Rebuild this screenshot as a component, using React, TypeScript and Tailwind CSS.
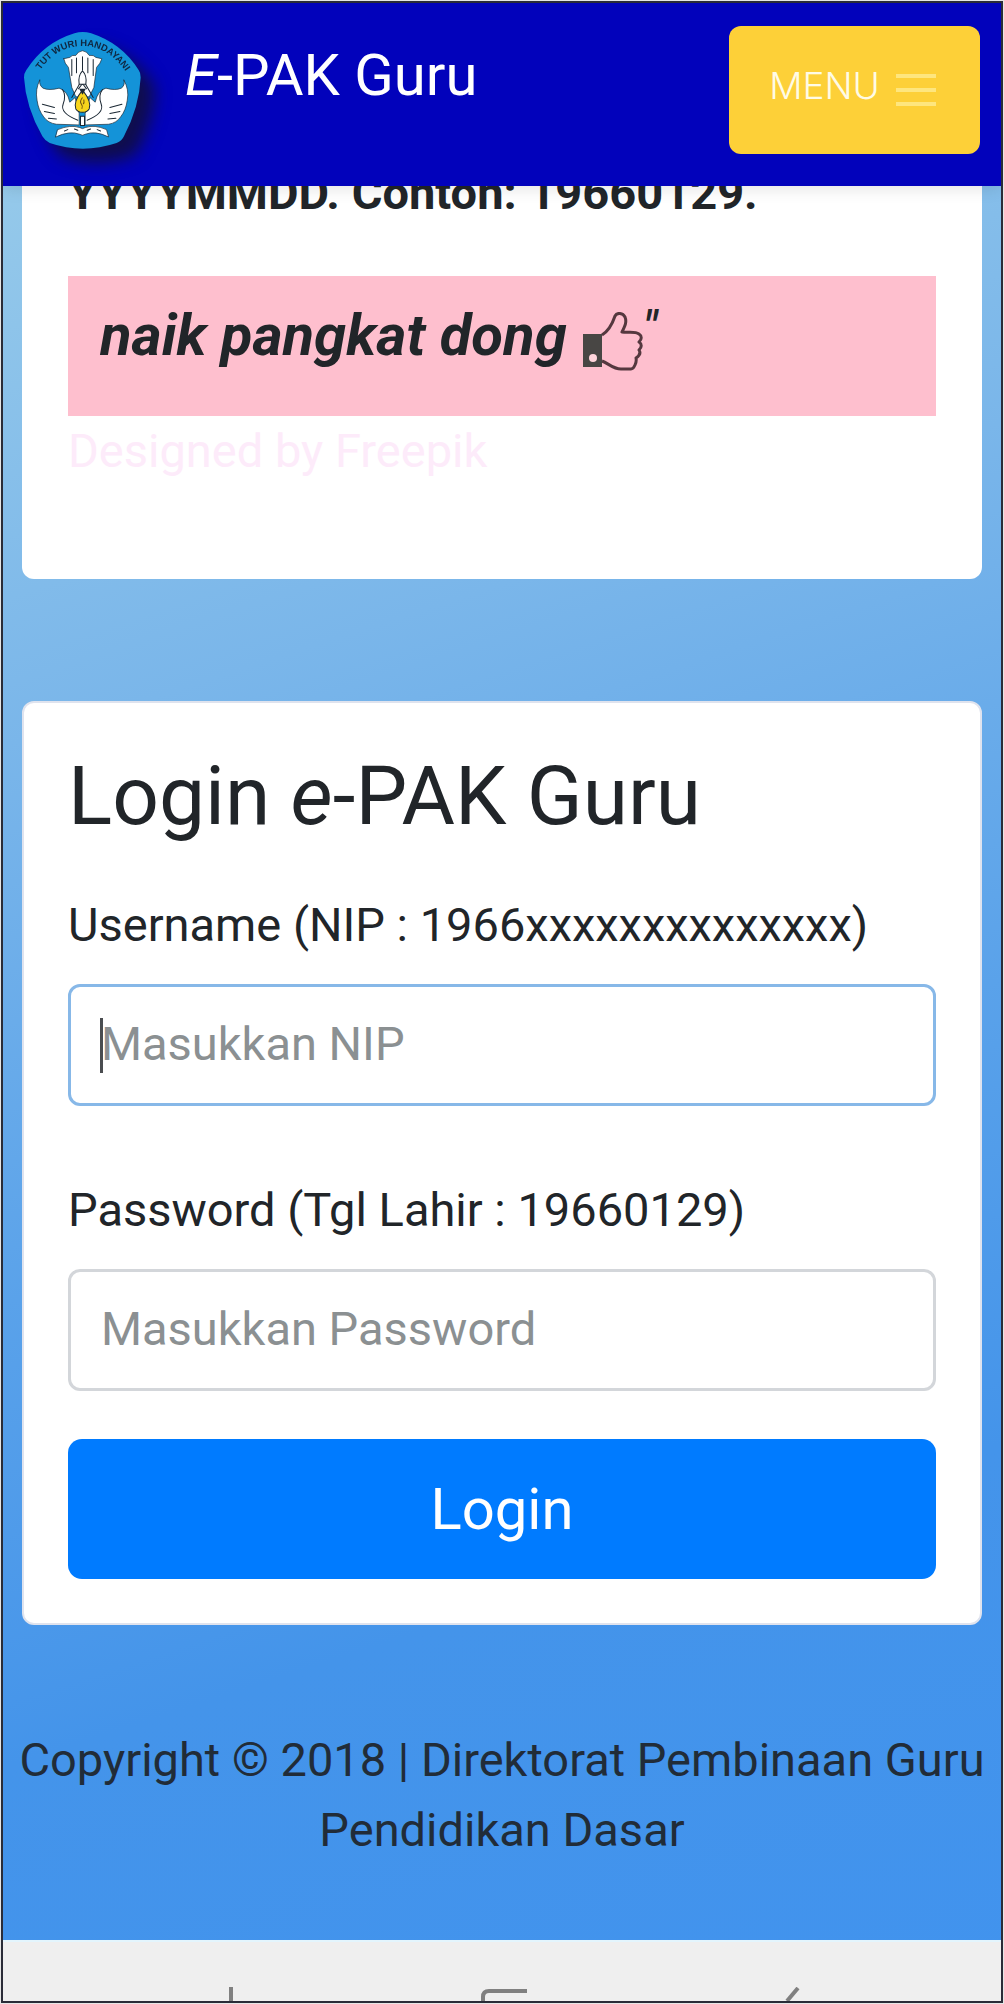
import type { InputHTMLAttributes } from 'react'

function Emblem() {
  return (
    <svg viewBox="75 96 350 350" className="size-[117px] shrink-0 drop-shadow-[14px_14px_8px_rgba(20,18,40,0.75)]" role="img" aria-label="Tut Wuri Handayani">
      <defs>
        <path id="motto" d="M116 222 Q166 138 250 138 Q334 138 386 226" />
      </defs>
      <path
        d="M226 100 Q250 92 276 100 Q368 130 418 210 Q424 218 424 232 Q420 320 374 408 Q368 422 352 428 Q250 462 152 428 Q138 422 130 408 Q80 320 75 232 Q75 220 82 210 Q134 128 226 100Z"
        fill="#1493d8"
      />
      <text fill="#10263f" fontFamily="Liberation Sans, Arial, sans-serif" fontSize="28" fontWeight="700">
        <textPath href="#motto" startOffset="50%" textAnchor="middle">
          TUT WURI HANDAYANI
        </textPath>
      </text>
      <g fill="#fff" stroke="#1a2733" strokeWidth="2" strokeLinejoin="round" strokeLinecap="round">
        <path d="M194 176 L212 172 Q218 164 230 166 Q236 154 250 152 Q264 154 270 166 Q284 164 290 172 L308 176 Q304 190 292 202 L284 262 L270 290 L230 290 L218 262 L208 202 Q196 190 194 176Z" />
        <path d="M122 240 Q108 268 114 300 Q118 330 134 350 Q146 368 172 372 L240 374 L240 340 L228 292 L212 306 Q204 270 180 264 Q150 272 132 264 Q120 256 122 240Z" />
        <path d="M374 240 Q390 268 384 300 Q380 330 364 350 Q352 368 328 372 L258 374 L258 340 L272 292 L288 306 Q296 270 320 264 Q348 272 366 264 Q378 256 374 240Z" />
        <path d="M176 388 Q214 372 242 382 Q250 388 258 382 Q286 372 322 388 L328 410 Q288 390 258 402 Q250 408 242 402 Q212 390 170 410Z" />
      </g>
      <g fill="none" stroke="#1a2733" strokeWidth="3" strokeLinecap="round">
        <path d="M218 178 V226 M232 174 V218 M250 170 V210 M266 174 V218 M282 178 V226" />
        <path d="M190 268 Q202 286 192 312 Q182 338 236 360 M310 268 Q296 286 306 312 Q316 338 264 360" />
        <path d="M130 312 L166 322 M136 334 L166 340 M148 354 L172 356 M368 312 L332 322 M362 334 L332 340 M350 354 L326 356" />
        <path d="M242 250 L218 292 M258 250 L282 292 M238 266 L250 250 L262 266" />
        <path d="M196 392 L206 388 M226 386 L236 390 M264 390 L274 386 M294 388 L304 392" />
      </g>
      <path d="M250 212 Q236 226 240 252 H260 Q264 226 250 212Z" fill="#fff" stroke="#1a2733" strokeWidth="3" />
      <path d="M250 270 Q222 304 230 326 Q236 336 250 336 Q264 336 270 326 Q278 304 250 270Z" fill="#f7d41c" stroke="#1a2733" strokeWidth="3" />
      <path d="M250 292 Q240 304 247 312 Q252 318 248 326 M254 298 Q256 308 252 312" fill="none" stroke="#6b4d10" strokeWidth="3" />
      <path d="M244 348 H256 V376 H244Z" fill="#fff" stroke="#1a2733" strokeWidth="3" />
      <path d="M240 266 L260 266 L250 284Z" fill="#1a2733" />
    </svg>
  )
}

function ThumbsUp() {
  return (
    <svg viewBox="0 0 60 60" className="size-[60px]" aria-hidden="true">
      <path
        d="M19 23 C27 18 30 10 32 4 C34 0 40 1 42 5 C44 10 42 14 39 20 C45 21 52 19 56 22 C59 24 59 27 56 30 C59 32 59 35 56 38 C58 41 56 44 53 46 C54 50 51 57 48 57 H38 C30 57 25 51 19 49"
        fill="none"
        stroke="#55383f"
        strokeWidth="3"
        strokeLinejoin="round"
      />
      <path d="M0 22 H19 V55 H0Z" fill="#484644" />
      <circle cx="10" cy="46" r="4" fill="#ffd5dc" />
    </svg>
  )
}

type FieldProps = InputHTMLAttributes<HTMLInputElement> & {
  id: string
  label: string
  active?: boolean
}

function Field({ id, label, active, ...rest }: FieldProps) {
  return (
    <div>
      <label htmlFor={id} className="mb-6 block text-[47px] leading-[70px]">
        {label}
      </label>
      <div className="relative">
        <input
          id={id}
          className={`block h-[122px] w-full rounded-xl border-[3px] bg-white px-[30px] pb-1 text-[47px] outline-none placeholder:text-[#8b9092] placeholder:opacity-100 ${
            active ? 'border-[#87b8e8]' : 'border-[#d3d6da]'
          }`}
          {...rest}
        />
        {active && <span className="absolute top-[34px] left-8 h-[55px] w-[3px] bg-[#4a4d50]" />}
      </div>
    </div>
  )
}

function Header() {
  return (
    <header className="relative z-10 flex h-[183px] items-start justify-between bg-[#0202bb] px-[21px] pt-[23px] shadow-[0_2px_16px_rgba(0,0,0,0.12)]">
      <a href="#" className="flex items-start gap-11 pt-[6px] text-[58px] leading-[87px] text-white">
        <Emblem />
        <span>
          <em>E</em>-PAK Guru
        </span>
      </a>
      <button
        type="button"
        className="flex h-32 w-[251px] items-center justify-center gap-4 rounded-xl bg-[#fdd038] pr-1 pb-1 font-[Inter,sans-serif] text-[37px] font-light text-[#fffbe6]"
      >
        <span className="pb-1">MENU</span>
        <svg viewBox="0 0 40 32" className="mt-1 h-8 w-10" stroke="#fee67e" strokeWidth="4" aria-hidden="true">
          <path d="M0 2H40M0 16H40M0 30H40" />
        </svg>
      </button>
    </header>
  )
}

export default function App() {
  return (
    <div className="min-h-screen bg-[#e6e6e6] p-px font-[Roboto,sans-serif] text-[47px] leading-[70px] text-[#212529]">
      <div className="overflow-hidden border-2 border-[#2a2c38] bg-[linear-gradient(162deg,#98cbea_5%,#7ab6ea_32%,#5aa2ea_56%,#4494ea_76%,#4193ee_100%)]">
        <Header />

        <main className="px-[19px]">
          {/* scrolled partly under the header */}
          <section className="-mt-7 rounded-b-xl bg-white px-[46px] pb-[93px]">
            <p className="font-bold">YYYYMMDD. Contoh: 19660129.</p>
            <blockquote className="mt-12 flex h-[140px] items-start bg-[#febfce] px-8 pt-4 text-[58px] leading-[87px] font-bold italic">
              <span className="mr-4">naik pangkat dong</span>
              <span className="mt-5">
                <ThumbsUp />
              </span>
              <span className="text-[47px] leading-[70px] font-medium">"</span>
            </blockquote>
            <p className="text-[#fdebfa]">Designed by Freepik</p>
          </section>

          <section className="mt-[122px] rounded-xl border-2 border-[#dfe3ee] bg-white p-11">
            <h1 className="mb-[45px] text-[82px] leading-[98px]">
              Login <em>e</em>-PAK Guru
            </h1>
            <form onSubmit={(e) => e.preventDefault()}>
              <div className="grid gap-[69px]">
                <Field id="nip" label="Username (NIP : 1966xxxxxxxxxxxxxx)" placeholder="Masukkan NIP" active />
                <Field
                  id="password"
                  type="password"
                  label="Password (Tgl Lahir : 19660129)"
                  placeholder="Masukkan Password"
                />
              </div>
              <button type="submit" className="mt-12 block h-[140px] w-full rounded-[14px] bg-[#007bff] text-[58px] text-white">
                Login
              </button>
            </form>
          </section>
        </main>

        <footer className="pt-[100px] pb-[75px] text-center text-[#212c38]">
          Copyright © 2018 | Direktorat Pembinaan Guru Pendidikan Dasar
        </footer>

        <nav className="border-t-2 border-[#e3f5fd] bg-[#efefef] pt-[45px]">
          <svg viewBox="0 0 998 14" className="block w-full" fill="none" stroke="#808080" aria-hidden="true">
            <path d="M228 0V14" strokeWidth="4" />
            <path d="M480 14V10Q480 4 486 4H524" strokeWidth="4" />
            <path d="M795 1L784 14" strokeWidth="4" />
          </svg>
        </nav>
      </div>
    </div>
  )
}
